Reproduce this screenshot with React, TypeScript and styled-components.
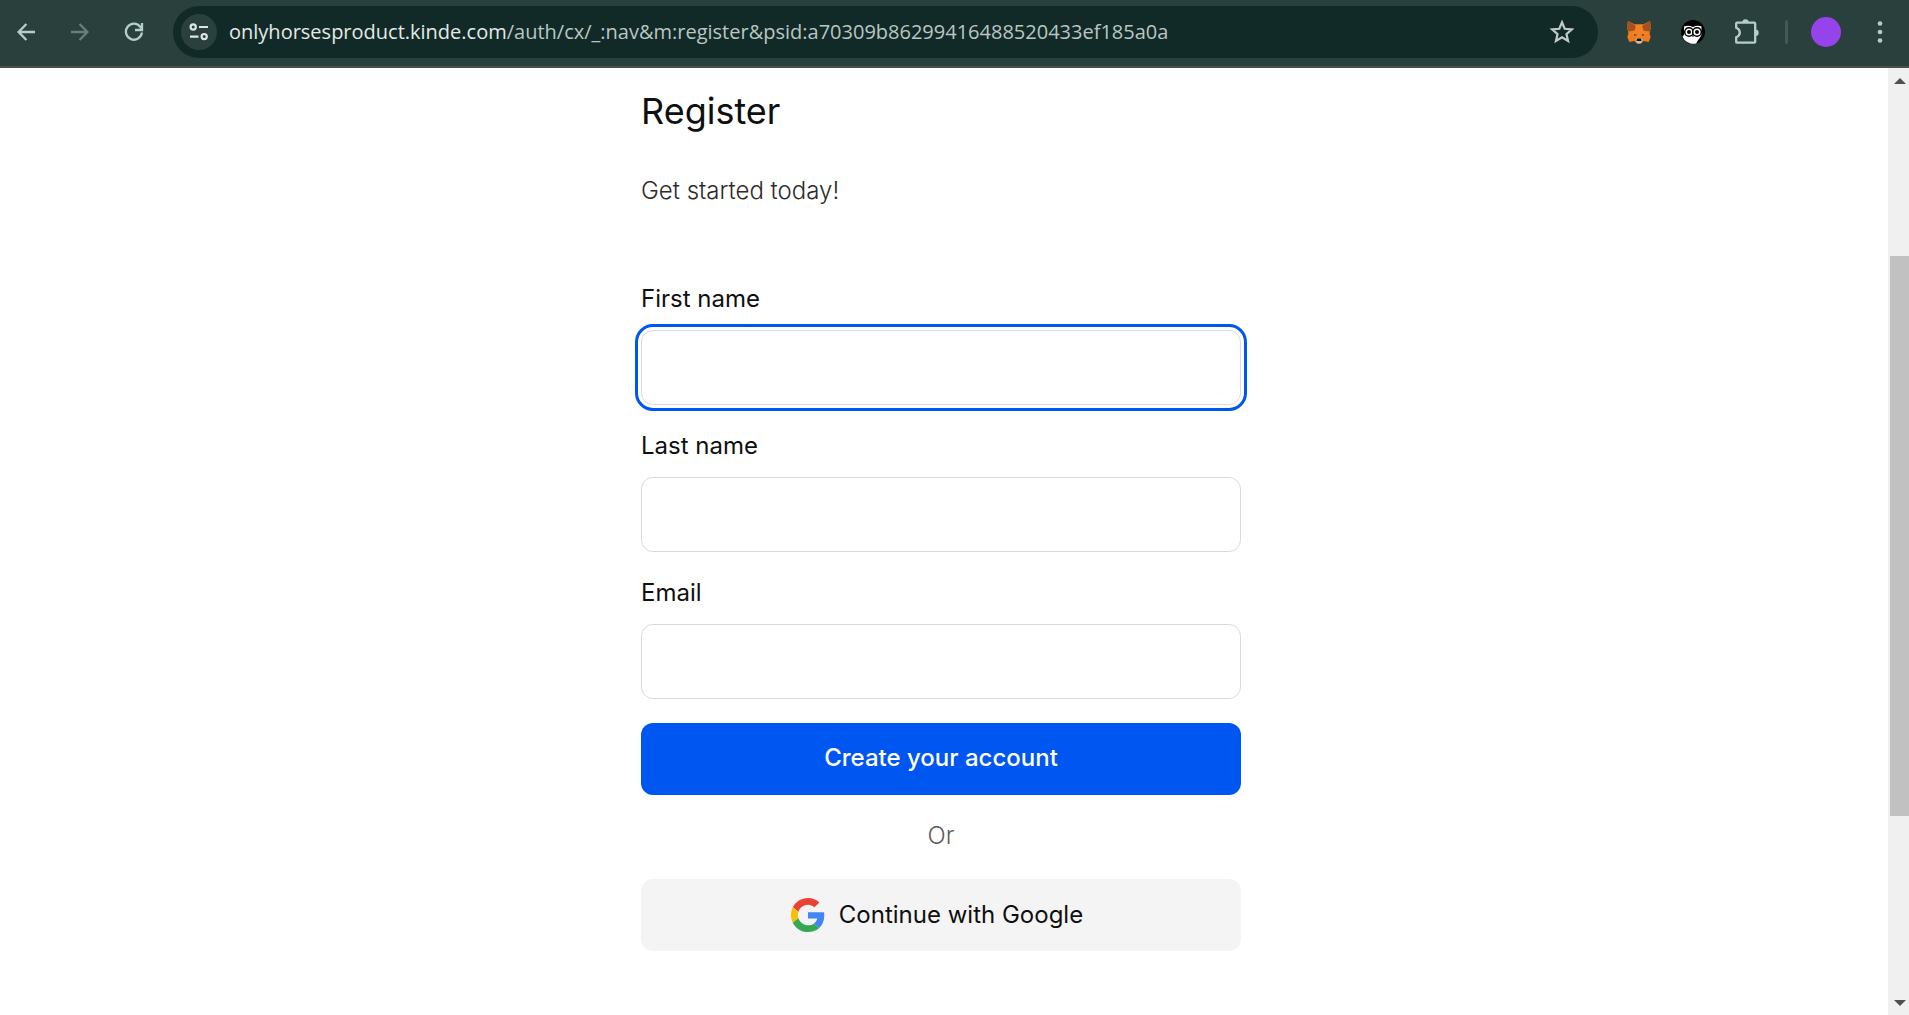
import React, { useState } from "react";
import styled, { createGlobalStyle } from "styled-components";

const GlobalStyle = createGlobalStyle`
  *, *::before, *::after { box-sizing: border-box; }
  html, body, #root { height: 100%; }
  body { margin: 0; background: #ffffff; color: #0f0f0f; font-family: Inter, "Liberation Sans", sans-serif; }
  button, input { font: inherit; }
`;

const Window = styled.div`
  display: flex;
  flex-direction: column;
  height: 100vh;
  overflow: hidden;
`;

const Toolbar = styled.header`
  display: flex;
  align-items: center;
  flex: none;
  height: 68px;
  padding: 0 11px 2px 8px;
  background: #29403d;
  border-bottom: 2px solid #4a4e4c;
`;

const Cluster = styled.div`
  display: flex;
  align-items: center;
  gap: 18px;
`;

const IconButton = styled.button<{ $dim?: boolean }>`
  display: grid;
  place-items: center;
  flex: none;
  width: 36px;
  height: 36px;
  padding: 0;
  border: 0;
  border-radius: 50%;
  background: transparent;
  color: ${(p) => (p.$dim ? "#6b7d7a" : "#b4cfcb")};
`;

const Omnibox = styled.div`
  display: flex;
  align-items: center;
  flex: 1;
  min-width: 0;
  height: 52px;
  margin: 0 23px 0 21px;
  padding: 0 18px 0 8px;
  border-radius: 26px;
  background: #122a27;
`;

const SiteInfo = styled(IconButton)`
  background: #29403d;
  color: #dfe5e4;
`;

const Address = styled.div`
  flex: 1;
  min-width: 0;
  margin-left: 12px;
  overflow: hidden;
  white-space: nowrap;
  font-family: "Open Sans", "Noto Sans", sans-serif;
  font-size: 20px;
  line-height: 32px;
  color: #b9c6c3;
`;

const Host = styled.span`
  color: #e3eae8;
`;

const Star = styled(IconButton)`
  color: #c3c9c8;
`;

const Divider = styled.span`
  width: 3px;
  height: 24px;
  margin: 0 2px;
  border-radius: 2px;
  background: #42595a;
`;

const Avatar = styled.span`
  width: 30px;
  height: 30px;
  border-radius: 50%;
  background: #9543eb;
`;

const Viewport = styled.div`
  display: flex;
  flex: 1;
  min-height: 0;
`;

const Page = styled.main`
  flex: 1;
  min-width: 0;
  padding: 21px 6px 0 0;
  overflow: hidden;
`;

const Column = styled.div`
  width: 100%;
  max-width: 600px;
  margin: 0 auto;
`;

const Title = styled.h1`
  margin: 0;
  font-size: 36px;
  line-height: 44px;
  font-weight: 400;
`;

const Subtitle = styled.p`
  margin: 42px 0 75px;
  font-size: 24px;
  line-height: 32px;
  font-weight: 350;
  color: #2b2b2b;
`;

const Form = styled.form`
  display: flex;
  flex-direction: column;
  gap: 24px;
`;

const Field = styled.div`
  display: flex;
  flex-direction: column;
  gap: 14px;
`;

const Label = styled.label`
  font-size: 24px;
  line-height: 34px;
`;

const TextInput = styled.input<{ $active: boolean }>`
  width: 100%;
  height: 75px;
  padding: 0 20px;
  border: 1px solid #dadada;
  border-radius: 12px;
  background: #ffffff;
  font-size: 24px;
  outline: ${(p) => (p.$active ? "3px solid #0056f1" : "none")};
  outline-offset: 3px;
`;

const ActionButton = styled.button<{ $primary?: boolean }>`
  display: flex;
  align-items: center;
  justify-content: center;
  gap: 14px;
  width: 100%;
  height: 72px;
  padding: ${(p) => (p.$primary ? "0 20px 2px" : "0 28px 0 20px")};
  border: 0;
  border-radius: 12px;
  font-size: 24px;
  line-height: 32px;
  font-weight: ${(p) => (p.$primary ? 500 : 400)};
  color: ${(p) => (p.$primary ? "#ffffff" : "#0f0f0f")};
  background: ${(p) => (p.$primary ? "#0056f1" : "#f4f4f4")};
`;

const Or = styled.p`
  margin: 24px 0 26px;
  text-align: center;
  font-size: 24px;
  line-height: 34px;
  font-weight: 350;
  color: #5c5c5c;
`;

const Scrollbar = styled.div`
  display: flex;
  flex-direction: column;
  align-items: flex-end;
  flex: none;
  width: 21px;
  padding: 10px 0 9px;
  background: #f0f0f0;
`;

const ScrollArrow = styled.span<{ $down?: boolean }>`
  width: 12px;
  height: 6px;
  margin-right: 3px;
  background: #505050;
  clip-path: ${(p) => (p.$down ? "polygon(0 0, 100% 0, 50% 100%)" : "polygon(0 100%, 50% 0, 100% 100%)")};
`;

const Track = styled.div`
  display: flex;
  flex-direction: column;
  flex: 1;
  width: 19px;
`;

const Space = styled.span<{ $grow: number }>`
  flex: ${(p) => p.$grow} 0 0;
`;

const Thumb = styled.span<{ $grow: number }>`
  flex: ${(p) => p.$grow} 0 0;
  background: #c1c1c1;
`;

const line = { fill: "none", stroke: "currentColor", strokeWidth: 2.3 };

const BackIcon = () => (
  <svg width="18" height="18" viewBox="0 0 18 18" {...line}>
    <path d="M18 9H1.6M9.4 1 1.6 9l7.8 8" />
  </svg>
);
const ForwardIcon = () => (
  <svg width="18" height="18" viewBox="0 0 18 18" {...line}>
    <path d="M0 9h16.4M8.6 1l7.8 8-7.8 8" />
  </svg>
);
const ReloadIcon = () => (
  <svg width="20" height="20" viewBox="0 0 20 20" {...line}>
    <path d="M17.9 10.5A8 8 0 1 1 16.4 5L18 7" />
    <path d="M18 1v7h-7" />
  </svg>
);
const TuneIcon = () => (
  <svg width="20" height="18" viewBox="0 0 20 18" {...line} strokeWidth="2.2">
    <circle cx="4.2" cy="4" r="2.6" />
    <path d="M10 4h9M1 13.6h8.5" />
    <circle cx="15.2" cy="13.6" r="2.6" />
  </svg>
);
const StarIcon = () => (
  <svg width="26" height="26" viewBox="0 0 24 24" {...line} strokeWidth="2">
    <path d="m12 3 2.5 6 6.6.6-5 4.3 1.5 6.4-5.6-3.4-5.6 3.4 1.5-6.4-5-4.3 6.6-.6Z" />
  </svg>
);
const FoxIcon = () => (
  <svg width="24" height="24" viewBox="0 0 24 24">
    <path d="m1 1 7 3.4h8L23 1l1 6-1.4 6.5 1.1 3.5-2 5-5-1L14 23.500h-4L7.300 21l-5 1-2-5 1.100-3.500L0 7Z" fill="#ee7b1c" />
    <path d="m1 1 8 5-1.500 4.500-6.300 1L0 7Zm22 0-8 5 1.500 4.500 6.300 1L24 7Z" fill="#a5501f" />
    <path d="m8 4.400 1 3L7.500 12 1.400 13.500l5.600 1.500 2 4h6l2-4 5.600-1.500L16.500 12 15 7.400l1-3Z" fill="#f58220" />
    <path d="m7 13.700 3 1.400-2.400.8Zm10 0-3 1.400 2.400.8Z" fill="#38424a" />
    <path d="m8.500 19 2-1h3l2 1-.8 3.500-1.200 1h-3l-1.200-1Z" fill="#c9bdb2" />
    <path d="M10 18.500h4l.5 2.500h-5Z" fill="#16120f" />
  </svg>
);
const OwlIcon = () => (
  <svg width="24" height="24" viewBox="0 0 24 24">
    <circle cx="12" cy="12" r="12" fill="#000" />
    <path d="M3 6.500c3-1.300 6-1 9 .5 3-1.500 6-1.800 8.500-.5V15c-1.500 3-4 5.500-5.300 8.500C9 24.800 3.500 21.500 1.500 16.500L3 15Z" fill="#fff" />
    <g fill="#fff" stroke="#000" strokeWidth="1.500">
      <circle cx="8" cy="12" r="4.300" />
      <circle cx="16" cy="12" r="4.300" />
    </g>
    <circle cx="8" cy="12" r="2" />
    <circle cx="16" cy="12" r="2" />
    <path d="m11 15.500 1 2 1-2Z" />
  </svg>
);
const PuzzleIcon = () => (
  <svg width="26" height="26" viewBox="0 0 26 26" {...line}>
    <path d="M2.200 4.500q0-.8.8-.8h17.200q1 0 1 1v18q0 1-1 1H3q-.8 0-.8-.8v-4.600c4.800-2 4.800-7.600 0-9.600Z" />
    <path d="M8.300 3.500a3.200 3.200 0 0 1 6.400 0ZM21.500 10.600a3.200 3.200 0 0 1 0 6.400Z" fill="currentColor" stroke="none" />
  </svg>
);
const DotsIcon = () => (
  <svg width="6" height="22" viewBox="0 0 6 22" fill="currentColor">
    <circle cx="3" cy="2.500" r="2.300" />
    <circle cx="3" cy="11" r="2.300" />
    <circle cx="3" cy="19.500" r="2.300" />
  </svg>
);
const GoogleIcon = () => (
  <svg width="34" height="34" viewBox="0 0 48 48">
    <path fill="#EA4335" d="M24 9.500c3.540 0 6.710 1.220 9.210 3.600l6.850-6.850C35.900 2.380 30.470 0 24 0 14.620 0 6.510 5.380 2.560 13.220l7.980 6.190C12.430 13.720 17.740 9.500 24 9.500z" />
    <path fill="#4285F4" d="M46.980 24.550c0-1.570-.15-3.090-.38-4.550H24v9.020h12.940c-.58 2.960-2.260 5.480-4.780 7.180l7.730 6c4.510-4.180 7.090-10.360 7.090-17.650z" />
    <path fill="#FBBC05" d="M10.530 28.590c-.48-1.450-.76-2.990-.76-4.590s.27-3.140.76-4.590l-7.980-6.190C.92 16.460 0 20.120 0 24c0 3.880.92 7.540 2.560 10.780l7.970-6.190z" />
    <path fill="#34A853" d="M24 48c6.480 0 11.930-2.130 15.890-5.810l-7.730-6c-2.150 1.450-4.920 2.300-8.160 2.300-6.260 0-11.570-4.220-13.470-9.910l-7.980 6.190C6.510 42.620 14.620 48 24 48z" />
  </svg>
);

const FIELDS = [
  { id: "first-name", label: "First name", type: "text" },
  { id: "last-name", label: "Last name", type: "text" },
  { id: "email", label: "Email", type: "email" },
];

export default function App() {
  const [active, setActive] = useState("first-name");
  return (
    <Window>
      <GlobalStyle />
      <Toolbar>
        <Cluster>
          <IconButton aria-label="Back"><BackIcon /></IconButton>
          <IconButton aria-label="Forward" $dim><ForwardIcon /></IconButton>
          <IconButton aria-label="Reload"><ReloadIcon /></IconButton>
        </Cluster>
        <Omnibox>
          <SiteInfo aria-label="View site information"><TuneIcon /></SiteInfo>
          <Address>
            <Host>onlyhorsesproduct.kinde.com</Host>/auth/cx/_:nav&amp;m:register&amp;psid:a70309b86299416488520433ef185a0a
          </Address>
          <Star aria-label="Bookmark this page"><StarIcon /></Star>
        </Omnibox>
        <Cluster>
          <IconButton aria-label="Fox wallet"><FoxIcon /></IconButton>
          <IconButton aria-label="Owl extension"><OwlIcon /></IconButton>
          <IconButton aria-label="Extensions"><PuzzleIcon /></IconButton>
          <Divider />
          <IconButton aria-label="Profile"><Avatar /></IconButton>
          <IconButton aria-label="Menu"><DotsIcon /></IconButton>
        </Cluster>
      </Toolbar>
      <Viewport>
        <Page>
          <Column>
            <Title>Register</Title>
            <Subtitle>Get started today!</Subtitle>
            <Form onSubmit={(e) => e.preventDefault()}>
              {FIELDS.map((f) => (
                <Field key={f.id}>
                  <Label htmlFor={f.id}>{f.label}</Label>
                  <TextInput id={f.id} type={f.type} $active={active === f.id} onFocus={() => setActive(f.id)} />
                </Field>
              ))}
              <ActionButton type="submit" $primary>Create your account</ActionButton>
            </Form>
            <Or>Or</Or>
            <ActionButton type="button"><GoogleIcon />Continue with Google</ActionButton>
          </Column>
        </Page>
        <Scrollbar aria-hidden="true">
          <ScrollArrow />
          <Track>
            <Space $grow={172} />
            <Thumb $grow={560} />
            <Space $grow={184} />
          </Track>
          <ScrollArrow $down />
        </Scrollbar>
      </Viewport>
    </Window>
  );
}
